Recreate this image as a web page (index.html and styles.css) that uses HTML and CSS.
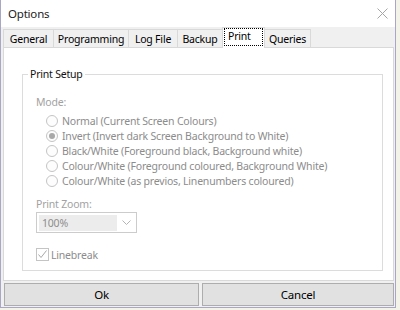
FILE: index.html
```html
<!DOCTYPE html>
<html lang="en">

<head>
	<meta charset="UTF-8">
	<title>Options</title>
	<link rel="stylesheet" href="styles.css">
</head>

<body>
	<div class="dialog">
		<div class="titlebar">
			<span class="title">Options</span>
			<svg class="close" width="11" height="11" viewBox="0 0 11 11">
				<path d="M0.5 0.5L10.5 10.5M10.5 0.5L0.5 10.5" stroke="#a6a6a6" stroke-width="1" fill="none" />
			</svg>
		</div>

		<div class="tabs">
			<div class="tab tab-general">General</div>
			<div class="tab tab-programming">Programming</div>
			<div class="tab tab-logfile">Log File</div>
			<div class="tab tab-backup">Backup</div>
			<div class="tab tab-print selected"><span class="focus">Print</span></div>
			<div class="tab tab-queries">Queries</div>
		</div>

		<div class="panel">
			<fieldset class="group">
				<legend>Print Setup</legend>

				<div class="caption">Mode:</div>
				<div class="options">
					<label class="option"><span class="radio"></span>Normal (Current Screen Colours)</label>
					<label class="option"><span class="radio checked"></span>Invert (Invert dark Screen Background to White)</label>
					<label class="option"><span class="radio"></span>Black/White (Foreground black, Background white)</label>
					<label class="option"><span class="radio"></span>Colour/White (Foreground coloured, Background White)</label>
					<label class="option"><span class="radio"></span>Colour/White (as previos, Linenumbers coloured)</label>
				</div>

				<div class="caption zoom-caption">Print Zoom:</div>
				<div class="combo">
					<span class="combo-value">100%</span>
					<svg class="chevron" width="9" height="5" viewBox="0 0 9 5">
						<path d="M0.5 0.5L4.5 4.5L8.5 0.5" stroke="#b4b4b4" stroke-width="1" fill="none" />
					</svg>
				</div>

				<label class="check-row">
					<span class="checkbox">
						<svg width="11" height="11" viewBox="0 0 11 11">
							<path d="M1.5 5.5L4 8.5L9.5 1.5" stroke="#a8a8a8" stroke-width="1" fill="none" />
						</svg>
					</span>
					Linebreak
				</label>
			</fieldset>
		</div>

		<div class="buttons">
			<button class="btn btn-ok">Ok</button>
			<button class="btn btn-cancel">Cancel</button>
		</div>
	</div>
</body>

</html>
```

FILE: styles.css
```css
body {
	margin: 0;
	background: #f4f3ea;
	font-family: "Noto Sans", sans-serif;
	font-size: 10.5px;
	letter-spacing: -0.2px;
	color: #000;
}

.dialog {
	width: 394px;
	height: 307px;
	border: 1px solid #a9a6c6;
	border-top: none;
	background: #f0f0f0;
	display: flex;
	flex-direction: column;
}

.titlebar {
	height: 27px;
	flex: none;
	background: #fff;
	display: flex;
	align-items: center;
	justify-content: space-between;
	padding: 0 7px 0 7px;
}

.title {
	font-size: 11.5px;
	color: #222;
}

.tabs {
	height: 20px;
	flex: none;
	display: flex;
	align-items: flex-end;
	padding-left: 2px;
}

.tab {
	height: 18px;
	box-sizing: border-box;
	border: 1px solid #d9d9d9;
	border-bottom: none;
	margin-right: -1px;
	background: #f0f0f0;
	display: flex;
	align-items: center;
	justify-content: center;
	line-height: 14px;
}

.tab-general { width: 51px; }
.tab-programming { width: 76px; }
.tab-logfile { width: 50px; }
.tab-backup { width: 46px; }
.tab-print { width: 43px; }
.tab-queries { width: 47px; }

.tab.selected {
	height: 21px;
	margin-bottom: -1px;
	background: #fff;
	position: relative;
	z-index: 1;
	align-items: flex-start;
	padding-top: 1px;
}

.focus {
	outline: 1px dotted #000;
	width: 37px;
	height: 16px;
	box-sizing: border-box;
	padding-left: 3px;
}

.panel {
	flex: none;
	height: 234px;
	box-sizing: border-box;
	margin: 0 1px 0 2px;
	background: #fff;
	border: 1px solid #d9d9d9;
	overflow: hidden;
}

.group {
	margin: 19px 10px 0 18px;
	padding: 14px 10px 8px 13px;
	border: 1px solid #dcdcdc;
}

.group legend {
	margin-left: -8px;
	padding: 0 2px;
	line-height: 14px;
	color: #111;
}

.caption {
	color: #a2a2a2;
	line-height: 14px;
}

.options {
	margin-top: 4px;
	padding-left: 10px;
}

.option {
	display: flex;
	align-items: center;
	height: 15px;
	color: #8c8c8c;
}

.radio {
	width: 12px;
	height: 12px;
	box-sizing: border-box;
	border: 1px solid #c4c4c4;
	border-radius: 50%;
	background: #fdfdfd;
	margin-right: 4px;
	display: flex;
	align-items: center;
	justify-content: center;
}

.radio.checked::after {
	content: "";
	width: 6px;
	height: 6px;
	border-radius: 50%;
	background: #a9a9a9;
}

.zoom-caption {
	margin-top: 9px;
}

.combo {
	margin-top: 1px;
	width: 101px;
	height: 21px;
	box-sizing: border-box;
	border: 1px solid #cccccc;
	display: flex;
	align-items: center;
	padding: 0 5px 0 2px;
	justify-content: space-between;
}

.combo-value {
	width: 78px;
	height: 16px;
	box-sizing: border-box;
	background: #ececec;
	color: #8c8c8c;
	padding-left: 3px;
	line-height: 16px;
}

.check-row {
	display: flex;
	align-items: center;
	gap: 2px;
	margin-top: 14px;
	height: 15px;
	color: #8c8c8c;
}

.checkbox {
	width: 13px;
	height: 13px;
	box-sizing: border-box;
	border: 1px solid #c4c4c4;
	display: flex;
	align-items: center;
	justify-content: center;
}

.buttons {
	display: flex;
	gap: 3px;
	margin: 2px 1px 0 3px;
}

.btn {
	height: 23px;
	box-sizing: border-box;
	border: 1px solid #adadad;
	background: #e1e1e1;
	font-family: inherit;
	font-size: 11.5px;
	letter-spacing: inherit;
	color: #000;
	padding: 0;
}

.btn-ok { width: 195px; }
.btn-cancel { flex: 1; }
```
